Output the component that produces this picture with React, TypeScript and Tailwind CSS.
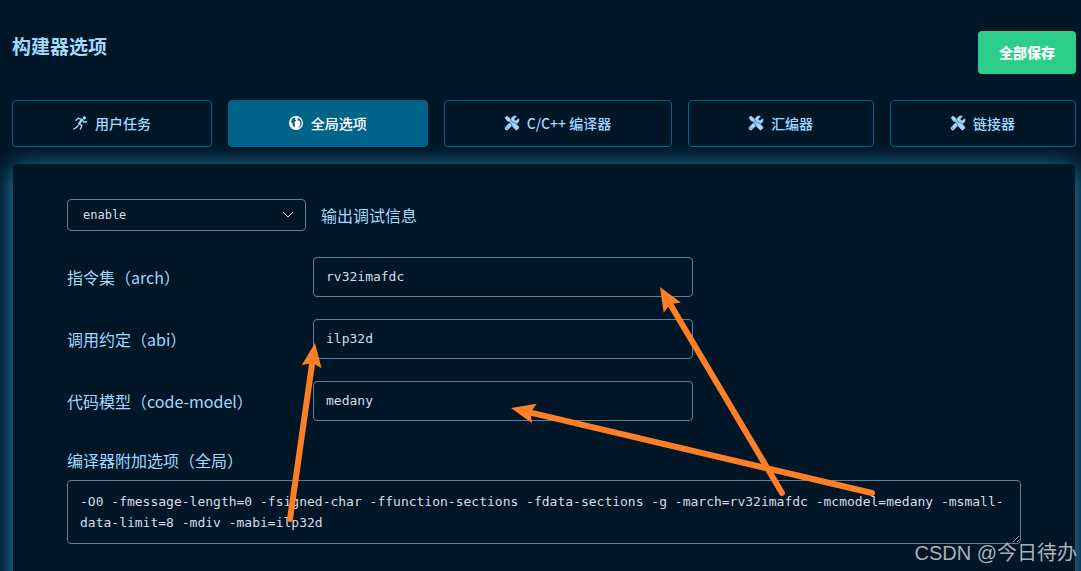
import React from 'react';
import { FaTools } from 'react-icons/fa';

const RunnerIcon: React.FC = () => (
  <svg className="size-[14px]" viewBox="0 0 14 14" fill="none" stroke="currentColor" strokeWidth={1.4} strokeLinecap="round" strokeLinejoin="round">
    <circle cx={11.3} cy={1.9} r={1.7} fill="currentColor" stroke="none" />
    <path d="M3 4.2L5.3 2.2L9 3.6L11 6.4L13.4 5.5" />
    <path d="M8.6 4L6.2 7.6" strokeWidth={2.2} />
    <path d="M6.2 7.6L8.9 9.8L7.2 13.2M5.3 9.3L3.6 11.4L0.7 13" />
  </svg>
);

const GlobeIcon: React.FC = () => (
  <svg className="size-[14px]" viewBox="0 0 14 14">
    <circle cx={7} cy={7} r={7} fill="currentColor" />
    <path
      fill="#006388"
      d="M4 2L6.6 1.4L6 3.6L7.4 4.6L5.2 6.2L6 8.2L5.6 11.6L3.8 9.6L3.6 7.4L2.2 6.4L2.6 3.8zM8.8 1.8C11.6 2.6 13 5 12.6 7.8C12.2 10.2 10.6 12 8.4 12.4C10.6 11 11.6 9 11.2 6.6L10.6 4.8L8.6 4.6z"
    />
  </svg>
);

const ToolsIcon: React.FC = () => <FaTools className="size-[14px] overflow-visible" strokeWidth={22} />;

const tabs = [
  { label: '用户任务', icon: RunnerIcon },
  { label: '全局选项', icon: GlobeIcon, active: true },
  { label: 'C/C++ 编译器', icon: ToolsIcon },
  { label: '汇编器', icon: ToolsIcon },
  { label: '链接器', icon: ToolsIcon },
];

const fields = [
  { id: 'arch', label: '指令集（arch）', value: 'rv32imafdc' },
  { id: 'abi', label: '调用约定（abi）', value: 'ilp32d' },
  { id: 'code-model', label: '代码模型（code-model）', value: 'medany' },
];

const arrows = [
  { x1: 782, y1: 493, x2: 660, y2: 287 },
  { x1: 872, y1: 493, x2: 511, y2: 408 },
  { x1: 290, y1: 519, x2: 315, y2: 343 },
];

const Arrow: React.FC<{ x1: number; y1: number; x2: number; y2: number }> = ({ x1, y1, x2, y2 }) => {
  const length = Math.hypot(x2 - x1, y2 - y1);
  const angle = (Math.atan2(y2 - y1, x2 - x1) * 180) / Math.PI;
  return (
    <g transform={`translate(${x1} ${y1}) rotate(${angle})`}>
      <line x1={0} y1={0} x2={length - 18} y2={0} stroke="#ff7f27" strokeWidth={6} strokeLinecap="round" />
      <path d={`M${length} 0l-24 -10l4 10l-4 10z`} fill="#ff7f27" />
    </g>
  );
};

const App: React.FC = () => {
  return (
    <div className="relative h-screen overflow-hidden bg-[#011627] pl-3 pr-[5px] font-['Noto_Sans_CJK_SC',sans-serif] text-[#a2d9ff]">
      <header className="flex items-center justify-between pb-[26px] pt-[31px]">
        <h1 className="mb-3.5 text-[19px] font-bold leading-7">构建器选项</h1>
        <button className="h-[43px] rounded bg-[#2dce89] px-[21px] pb-0.5 text-sm font-black text-white">全部保存</button>
      </header>

      <nav className="flex gap-4">
        {tabs.map(({ label, icon: Icon, active }) => (
          <button
            key={label}
            className={`flex h-[47px] flex-auto items-center justify-center gap-2 rounded border border-[#006388] pb-0.5 text-sm font-medium ${
              active ? 'bg-[#006388] text-white' : ''
            }`}
          >
            <Icon />
            {label}
          </button>
        ))}
      </nav>

      <main className="mx-px mt-[17px] h-screen rounded bg-[#011627] px-[54px] pt-[35px] shadow-[0_4px_24px_#2595c4]">
        <div className="flex items-center gap-[15px]">
          <div className="relative">
            <select
              id="debug"
              defaultValue="enable"
              className="block h-8 w-[239px] appearance-none rounded border border-[#5f7e97] bg-transparent px-[15px] font-['DejaVu_Sans_Mono',monospace] text-xs text-[#d6deeb]"
            >
              <option>enable</option>
              <option>disable</option>
            </select>
            <svg className="pointer-events-none absolute right-3 top-3 h-2 w-3" viewBox="0 0 12 8" fill="none" stroke="#d6deeb">
              <path d="M1 1l5 5l5 -5" />
            </svg>
          </div>
          <label htmlFor="debug">输出调试信息</label>
        </div>

        <div className="mt-[26px] flex flex-col gap-[22px]">
          {fields.map(({ id, label, value }) => (
            <div key={id} className="flex items-center">
              <label htmlFor={id} className="w-[246px]">{label}</label>
              <input
                id={id}
                defaultValue={value}
                className="h-10 w-[380px] rounded border border-[#5f7e97] bg-transparent px-3 pb-0.5 font-['DejaVu_Sans_Mono',monospace] text-[13px] text-[#d6deeb]"
              />
            </div>
          ))}
        </div>

        <label htmlFor="extra" className="mb-2 mt-[27px] block leading-6">编译器附加选项（全局）</label>
        <textarea
          id="extra"
          className="block h-16 w-full resize rounded border border-[#5f7e97] bg-transparent px-3 py-2.5 font-['DejaVu_Sans_Mono',monospace] text-[13px] leading-[21px] text-[#d6deeb]"
          defaultValue="-O0 -fmessage-length=0 -fsigned-char -ffunction-sections -fdata-sections -g -march=rv32imafdc -mcmodel=medany -msmall-data-limit=8 -mdiv -mabi=ilp32d"
        />
      </main>

      {/* Annotation arrows */}
      <svg className="pointer-events-none absolute left-0 top-0 h-[571px] w-[1081px]" viewBox="0 0 1081 571">
        {arrows.map((arrow) => (
          <Arrow key={arrow.x2} {...arrow} />
        ))}
      </svg>

      <p className="absolute bottom-1 right-1 font-['Liberation_Sans','Noto_Sans_CJK_SC',sans-serif] text-xl leading-7 text-[#a9b0b7]">
        CSDN @今日待办
      </p>
    </div>
  );
};

export default App;
